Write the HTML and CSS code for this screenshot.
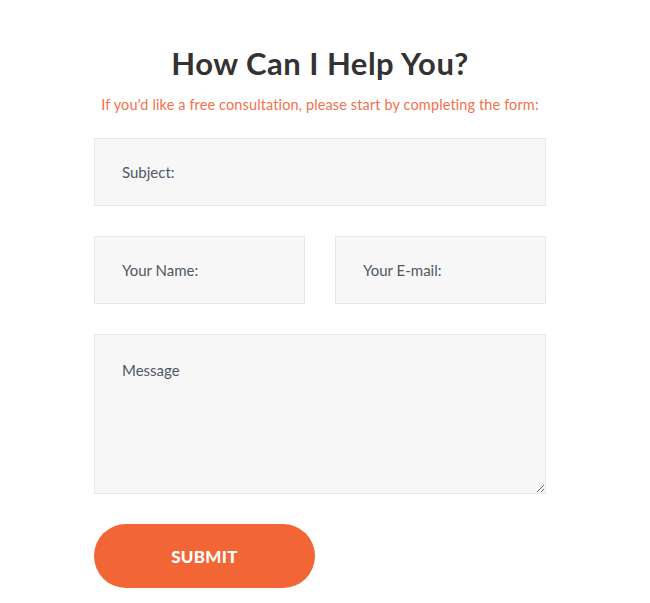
FILE: index.html
```html
<!DOCTYPE html>
<html lang="en">
<head>
<meta charset="utf-8">
<title>Contact</title>
<link rel="stylesheet" href="styles.css">
</head>
<body>
<section class="contact">
  <h1 class="title">How Can I Help You?</h1>
  <p class="lead">If you'd like a free consultation, please start by completing the form:</p>
  <form class="form">
    <input class="field" type="text" placeholder="Subject:">
    <div class="row">
      <input class="field" type="text" placeholder="Your Name:">
      <input class="field" type="email" placeholder="Your E-mail:">
    </div>
    <textarea class="field message" placeholder="Message"></textarea>
    <button class="submit" type="button">SUBMIT</button>
  </form>
</section>
</body>
</html>
```
FILE: styles.css
```css
html, body {
  margin: 0;
  padding: 0;
  background: #ffffff;
}
body {
  font-family: "Lato", "Open Sans", sans-serif;
}
.contact {
  width: 452px;
  margin-left: 94px;
  padding-top: 44px;
}
.title {
  margin: 0;
  text-align: center;
  font-size: 31px;
  line-height: 38px;
  font-weight: 700;
  color: #333333;
  letter-spacing: 0.5px;
}
.lead {
  margin: 13px -20px 0;
  text-align: center;
  font-size: 14.5px;
  line-height: 20px;
  color: #f3714b;
  font-weight: 400;
  letter-spacing: 0.12px;
}
.form {
  margin-top: 23px;
  display: flex;
  flex-direction: column;
  gap: 30px;
}
.row {
  display: flex;
  gap: 30px;
}
.row .field {
  flex: 1;
  min-width: 0;
}
.field {
  box-sizing: border-box;
  height: 68px;
  margin: 0;
  padding: 0 27px;
  border: 1px solid #e8e8e8;
  background: #f7f7f7;
  font-family: "Lato", "Open Sans", sans-serif;
  font-size: 15px;
  font-weight: 400;
  color: #444c5a;
  outline: none;
  border-radius: 0;
}
.field::placeholder {
  color: #505767;
  opacity: 1;
}
.message {
  height: 160px;
  padding: 26px 27px;
  resize: vertical;
  display: block;
}
.submit {
  width: 221px;
  height: 64px;
  border: none;
  border-radius: 32px;
  background: #f26535;
  color: #ffffff;
  font-family: "Lato", "Open Sans", sans-serif;
  font-weight: 900;
  font-size: 17px;
  letter-spacing: 0.3px;
  cursor: pointer;
}
```
